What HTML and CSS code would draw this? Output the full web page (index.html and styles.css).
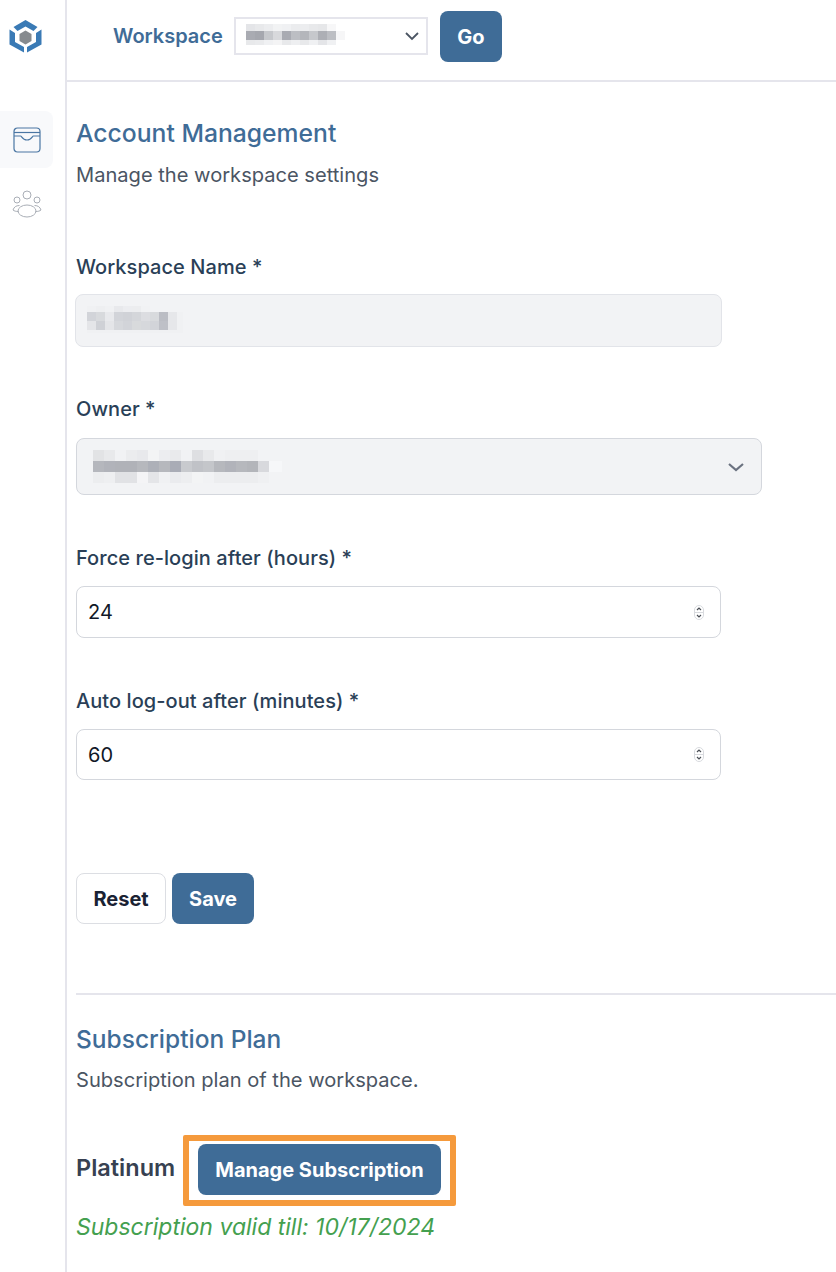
FILE: index.html
```html
<!DOCTYPE html>
<html lang="en">
<head>
<meta charset="UTF-8">
<meta name="viewport" content="width=device-width, initial-scale=1.0">
<title>Account Management</title>
<link rel="stylesheet" href="styles.css">
</head>
<body>
<div class="app">
    <aside class="sidebar">
        <svg class="logo" width="33" height="33" viewBox="0 0 33 33" fill="#3a7ab5">
            <path d="M16.500 0 L28.500 7 L24.500 11 L16.500 6.500 L8.500 11 L4.500 7 Z"/>
            <path d="M0.500 9.500 L6 13 V22 L15 27 V32.500 L0.500 24.500 Z"/>
            <path d="M32.500 9.500 L27 13 V22 L18 27 V32.500 L32.500 24.500 Z"/>
            <path d="M16.500 10.500 L22.500 14 V21 L16.500 24.500 L10.500 21 V14 Z" fill="#868a8e"/>
        </svg>
        <div class="nav-item active">
            <svg width="28" height="26" viewBox="0 0 28 26" fill="none" stroke="#4a76a3" stroke-width="1.200">
                <rect x="1" y="1" width="26" height="24" rx="3.500"/>
                <path d="M1 5.500 H27"/>
                <path d="M1 9 H7.500 C9 9 9 13 14 13 C19 13 19 9 20.500 9 H27"/>
            </svg>
        </div>
        <div class="nav-item">
            <svg width="32" height="28" viewBox="0 0 32 28" fill="none" stroke="#a9aeb6" stroke-width="1">
                <circle cx="16" cy="5" r="4"/>
                <circle cx="6" cy="10" r="3"/>
                <circle cx="26" cy="10" r="3"/>
                <ellipse cx="16" cy="21" rx="9" ry="6"/>
                <path d="M7.500 21.500 C5 21.500 3 21 2 20 C3 17 5 15.500 8.500 15.500"/>
                <path d="M24.500 21.500 C27 21.500 29 21 30 20 C29 17 27 15.500 23.500 15.500"/>
            </svg>
        </div>
    </aside>

    <div class="main">
        <header class="topbar">
            <span class="topbar-label">Workspace</span>
            <div class="workspace-select">
                <span class="redact redact-workspace"></span>
                <svg class="chevron" width="16" height="10" viewBox="0 0 16 10" fill="none" stroke="#4b5563" stroke-width="1.800"><path d="M2 2 L8 8 L14 2"/></svg>
            </div>
            <button class="btn btn-primary btn-go">Go</button>
        </header>

        <main class="content">
            <h2 class="title">Account Management</h2>
            <p class="subtitle">Manage the workspace settings</p>

            <div class="field field-name">
                <label>Workspace Name *</label>
                <div class="input input-disabled input-name"><span class="redact redact-name"></span></div>
            </div>
            <div class="field field-owner">
                <label>Owner *</label>
                <div class="input input-disabled input-owner">
                    <span class="redact redact-owner"></span>
                    <svg class="chevron" width="18" height="10" viewBox="0 0 18 10" fill="none" stroke="#6b7280" stroke-width="2.200"><path d="M2 2 L9 8 L16 2"/></svg>
                </div>
            </div>
            <div class="field field-hours">
                <label>Force re-login after (hours) *</label>
                <div class="input input-number">
                    24
                    <svg class="spinner" width="10" height="15" viewBox="0 0 10 15" fill="none" stroke="#d8dade">
                        <rect x="0.500" y="0.500" width="9" height="14" rx="4.500"/>
                        <path d="M0.500 7.500 H9.500"/>
                        <path d="M3 5 L5 3 L7 5 M3 10 L5 12 L7 10" stroke="#4b4f56" stroke-width="1.200"/>
                    </svg>
                </div>
            </div>
            <div class="field field-minutes">
                <label>Auto log-out after (minutes) *</label>
                <div class="input input-number">
                    60
                    <svg class="spinner" width="10" height="15" viewBox="0 0 10 15" fill="none" stroke="#d8dade">
                        <rect x="0.500" y="0.500" width="9" height="14" rx="4.500"/>
                        <path d="M0.500 7.500 H9.500"/>
                        <path d="M3 5 L5 3 L7 5 M3 10 L5 12 L7 10" stroke="#4b4f56" stroke-width="1.200"/>
                    </svg>
                </div>
            </div>

            <div class="actions">
                <button class="btn btn-outline">Reset</button>
                <button class="btn btn-primary btn-save">Save</button>
            </div>

            <hr class="divider">

            <h2 class="title">Subscription Plan</h2>
            <p class="subtitle">Subscription plan of the workspace.</p>

            <div class="plan">
                <span class="plan-name">Platinum</span>
                <div class="highlight">
                    <button class="btn btn-primary btn-manage">Manage Subscription</button>
                </div>
            </div>
            <p class="valid">Subscription valid till: 10/17/2024</p>
        </main>
    </div>
</div>
</body>
</html>
```

FILE: styles.css
```css
* {
    box-sizing: border-box;
}
body {
    margin: 0;
    font-family: Inter, "Liberation Sans", sans-serif;
    background-color: #fff;
    color: #1f2937;
    overflow: hidden;
}
.app {
    display: flex;
    height: 1272px;
}
.sidebar {
    width: 67px;
    flex-shrink: 0;
    border-right: 2px solid #e5e5ec;
    display: flex;
    flex-direction: column;
    align-items: center;
}
.logo {
    margin: 20px 15px 0 0;
}
.nav-item {
    width: 53px;
    height: 57px;
    margin-right: 12px;
    display: flex;
    align-items: center;
    justify-content: center;
    padding-left: 1px;
    border-radius: 0 8px 8px 0;
}
.nav-item.active {
    background-color: #f8f9fb;
    margin-top: 58px;
}
.nav-item + .nav-item {
    margin-top: 9px;
    height: 56px;
    align-items: flex-start;
    padding-top: 13px;
}
.main {
    flex: 1;
    min-width: 0;
}
.topbar {
    height: 82px;
    border-bottom: 2px solid #e5e5ec;
    display: flex;
    align-items: flex-start;
    padding-left: 46px;
}
.topbar-label {
    font-size: 20px;
    font-weight: 600;
    color: #3f6c97;
    line-height: 24px;
    margin-top: 24px;
    width: 121px;
}
.workspace-select {
    width: 194px;
    height: 38px;
    margin-top: 17px;
    border: 2px solid #e5e5ec;
    display: flex;
    align-items: center;
    justify-content: space-between;
    padding: 0 6px 0 10px;
}
.btn {
    font-family: inherit;
    font-size: 20px;
    font-weight: 650;
    border-radius: 8px;
    border: none;
    padding: 0;
    line-height: 24px;
}
.btn-primary {
    background-color: #3f6c97;
    color: #fff;
}
.btn-go {
    width: 62px;
    height: 51px;
    margin: 11px 0 0 12px;
}
.content {
    padding: 0 0 0 9px;
}
.title {
    font-size: 24.700px;
    font-weight: 550;
    color: #3f6c97;
    line-height: 30px;
    margin: 0;
    padding-top: 36px;
}
.subtitle {
    font-size: 20.100px;
    color: #4b5563;
    line-height: 24px;
    margin: 0;
    padding-top: 15px;
}
.field label {
    display: block;
    font-size: 20px;
    font-weight: 500;
    color: #2a3f57;
    line-height: 24px;
    letter-spacing: 0.060px;
}
.field-name {
    padding-top: 68px;
}
.field-owner {
    padding-top: 50px;
}
.field-hours,
.field-minutes {
    padding-top: 51px;
}
.input {
    display: flex;
    align-items: center;
    justify-content: space-between;
    border-radius: 8px;
    border: 1.500px solid #d4d7dd;
    font-size: 20px;
    color: #111827;
}
.input-disabled {
    background-color: #f2f3f5;
    border-color: #e2e4e9;
}
.input-name {
    width: 647px;
    height: 53px;
    margin: 15px 0 0 -1px;
    padding-left: 10.500px;
}
.input-owner {
    width: 686px;
    height: 57px;
    margin-top: 17px;
    border-color: #d4d7dd;
    padding: 0 16px 0 15.500px;
}
.input-number {
    width: 645px;
    height: 52px;
    margin-top: 16px;
    padding: 0 16.500px 0 11px;
}
.field-minutes .input-number {
    height: 51px;
}
.redact {
    display: block;
    flex-shrink: 0;
    filter: blur(0.500px);
    background-repeat: no-repeat;
}
.redact-workspace {
    width: 99px;
    height: 21px;
    margin-bottom: 3px;
    background-image:
        linear-gradient(90deg, #e4e5e8 0 9px, #e8e9eb 9px 18px, #ecedef 18px 27px, #f2f3f4 27px 36px, #f0f1f3 36px 45px, #ebecee 45px 54px, #ecedef 54px 63px, #e8e9eb 63px 72px, #e6e7e9 72px 81px, #f7f7f8 81px 90px, #fff 90px),
        linear-gradient(90deg, #a9abb2 0 9px, #a5a7ae 9px 18px, #c6c8cc 18px 27px, #d8d9dc 27px 36px, #a9abb2 36px 45px, #bcbec3 45px 54px, #b4b6bb 54px 63px, #c6c8cc 63px 72px, #adafb5 72px 81px, #bcbec3 81px 90px, #f6f6f7 90px),
        linear-gradient(90deg, #e8e9eb 0 9px, #eaebed 9px 18px, #f0f1f3 18px 27px, #f4f4f5 27px 36px, #e8e9eb 36px 45px, #eeeff1 45px 54px, #e8e9eb 54px 63px, #f0f1f3 63px 72px, #e4e5e8 72px 81px, #f0f1f3 81px 90px, #fff 90px);
    background-size: 100% 7px, 100% 9px, 100% 5px;
    background-position: 0 0, 0 7px, 0 16px;
}
.redact-name {
    width: 96px;
    height: 27px;
    margin-bottom: 2px;
    background-color: #f0f1f3;
    background-image:
        linear-gradient(90deg, #f0f1f3 0 9px, #eeeff1 9px 18px, #f0f1f3 18px 27px, #e8e9ec 27px 36px, #ecedf0 36px 45px, #ecedef 45px 54px, #f1f2f4 54px 63px, #f2f3f5 63px),
        linear-gradient(90deg, #d2d4d9 0 9px, #d8dadd 9px 18px, #e8e9ec 18px 27px, #d2d4d9 27px 36px, #d0d2d7 36px 45px, #d4d6da 45px 54px, #dcdde1 54px 63px, #d8dadd 63px 72px, #bbbdc4 72px 81px, #e6e7ea 81px 90px, #f0f1f3 90px),
        linear-gradient(90deg, #e4e5e8 0 9px, #cfd1d6 9px 18px, #e4e5e8 18px 27px, #d6d8dc 27px 36px, #d2d4d9 36px 45px, #d8dadc 45px 54px, #d6d8dc 54px 63px, #d2d4d9 63px 72px, #bec0c7 72px 81px, #e6e7ea 81px 90px, #f0f1f3 90px);
    background-size: 100% 6px, 100% 9px, 100% 9px;
    background-position: 0 0, 0 6px, 0 15px;
}
.redact-owner {
    width: 189px;
    height: 33px;
    background-image:
        linear-gradient(90deg, #e2e3e5 0 11px, #e8e9eb 11px 22px, #f1f2f4 22px 33px, #ebecee 33px 44px, #e8e9ec 44px 55px, #f3f4f5 55px 66px, #ecedf0 66px 77px, #e9eaec 77px 88px, #f1f2f4 88px 99px, #dedfe2 99px 110px, #e8e9eb 110px 121px, #f0f1f3 121px 132px, #eeeff1 132px 165px, #f2f3f5 165px),
        linear-gradient(90deg, #b5b7bd 0 11px, #b1b3ba 11px 22px, #b0b2b8 22px 44px, #b6b8bd 44px 55px, #adb0b8 55px 66px, #b6b8bd 66px 77px, #a9acb6 77px 88px, #c8cace 88px 99px, #c0c2c7 99px 110px, #c4c6ca 110px 121px, #b6b8bd 121px 132px, #b1b3ba 132px 143px, #b6b8bd 143px 154px, #b3b5ba 154px 165px, #d8d9dd 165px 176px, #f6f7f9 176px),
        linear-gradient(90deg, #ecedef 0 11px, #eeeff1 11px 22px, #e1e2e5 22px 44px, #f4f4f6 44px 55px, #e4e5e8 55px 66px, #f0f1f3 66px 77px, #eaebee 77px 88px, #edeef0 88px 99px, #f3f4f5 99px 110px, #f1f2f4 110px 121px, #ecedef 121px 165px, #eff0f2 165px 176px, #f2f3f5 176px);
    background-size: 100% 11px;
    background-position: 0 0, 0 11px, 0 22px;
}
.actions {
    display: flex;
    gap: 6px;
    padding-top: 93px;
}
.btn-outline {
    width: 90px;
    height: 51px;
    background-color: #fff;
    border: 1.500px solid #dcdee3;
    color: #1a2233;
}
.btn-save {
    width: 82px;
    height: 51px;
}
.divider {
    border: none;
    border-top: 2px solid #e5e5ec;
    margin: 69px 0 0 0;
}
.divider + .title {
    padding-top: 29px;
    font-size: 24.500px;
}
.divider + .title + .subtitle {
    padding-top: 14px;
}
.plan {
    display: flex;
    align-items: flex-start;
    margin-top: 43px;
}
.plan-name {
    font-size: 23.500px;
    font-weight: 600;
    color: #374151;
    line-height: 26px;
    width: 107px;
    margin-top: 20px;
}
.highlight {
    width: 273px;
    height: 71px;
    border: 6px solid #f59a3c;
    border-radius: 2px;
    padding: 3px 0 0 9px;
}
.btn-manage {
    width: 243px;
    height: 51px;
}
.valid {
    font-size: 23px;
    font-style: italic;
    color: #44a04f;
    line-height: 26px;
    margin: 8px 0 0 0;
}
```
